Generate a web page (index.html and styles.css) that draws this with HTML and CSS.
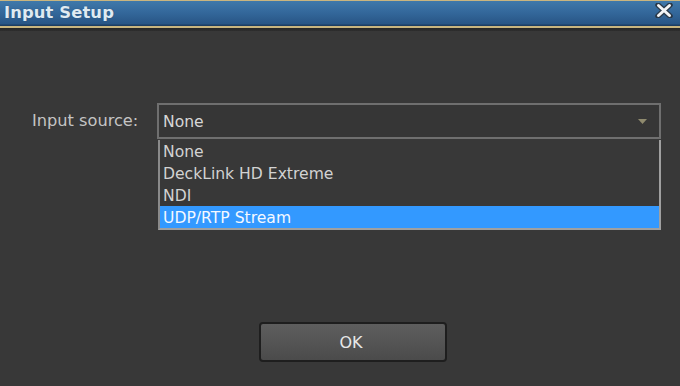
FILE: index.html
```html
<!DOCTYPE html>
<html>
<head>
<meta charset="utf-8">
<link rel="stylesheet" href="styles.css">
</head>
<body>
<div class="window">
  <div class="titlebar">
    <span class="title">Input Setup</span>
    <svg class="close" width="18" height="15" viewBox="0 0 18 15">
      <path d="M3 2 L15 13 M15 2 L3 13" stroke="#2a3a4a" stroke-width="5.5" stroke-linecap="round"/>
      <path d="M3.5 2.5 L14.5 12.5 M14.5 2.5 L3.5 12.5" stroke="#f2f4f6" stroke-width="3" stroke-linecap="round"/>
    </svg>
  </div>
  <div class="content">
    <div class="field">
      <label class="label">Input source:</label>
      <div class="combo">
        <div class="combo-box">
          <span class="combo-value">None</span>
          <svg class="arrow" width="9" height="6" viewBox="0 0 9 6"><path d="M0 0 L9 0 L4.5 5 Z" fill="#8f8a6e"/></svg>
        </div>
        <ul class="list">
          <li class="item">None</li>
          <li class="item">DeckLink HD Extreme</li>
          <li class="item">NDI</li>
          <li class="item selected">UDP/RTP Stream</li>
        </ul>
      </div>
    </div>
    <div class="actions">
      <button class="ok">OK</button>
    </div>
  </div>
</div>
</body>
</html>
```

FILE: styles.css
```css
* { box-sizing: border-box; }
html, body {
  margin: 0;
  padding: 0;
  width: 680px;
  height: 386px;
  background: #383838;
  overflow: hidden;
}
.window {
  width: 680px;
  height: 386px;
  display: flex;
  flex-direction: column;
  background: #383838;
  font-family: "DejaVu Sans", Verdana, sans-serif;
}
.titlebar {
  height: 31px;
  display: flex;
  align-items: flex-start;
  justify-content: space-between;
  padding: 0 7px 0 4px;
  border-top: 1px solid #c9b57f;
  background:
    linear-gradient(to bottom, #3f79aa 0px, #33679a 12px, #285585 23px, #1c3d62 24px, #1c3d62 25px, #c9b57f 25px, #c9b57f 27px, #262626 27px, #2e2e2e 30px);
}
.title {
  color: #dfeaf2;
  font-weight: bold;
  font-size: 16.4px;
  line-height: 24px;
  letter-spacing: 0.1px;
  text-shadow: 0 0 1px #24496f;
}
.close {
  margin-top: 2px;
}
.content {
  flex: 1;
  display: flex;
  flex-direction: column;
  padding: 72px 19px 24px 32px;
}
.field {
  display: flex;
  align-items: flex-start;
}
.label {
  width: 125px;
  color: #c4c4c4;
  font-size: 16.2px;
  line-height: 36px;
}
.combo {
  position: relative;
  width: 504px;
}
.combo-box {
  height: 36px;
  border: 2px solid #6f6f6f;
  background: #363636;
  display: flex;
  align-items: center;
  justify-content: space-between;
  padding: 1px 12px 0 4px;
}
.combo-value {
  color: #d6d6d6;
  font-size: 15.6px;
}
.arrow {
  margin-top: 0;
}
.list {
  position: absolute;
  left: 1px;
  top: 37px;
  width: 503px;
  margin: 0;
  padding: 0;
  list-style: none;
  background: #383838;
  border-left: 2px solid #8a8a8a;
  border-right: 2px solid #a0a0a0;
  border-bottom: 2px solid #a0a0a0;
}
.item {
  height: 22px;
  line-height: 20px;
  padding: 2px 0 0 3px;
  color: #d2d2d2;
  font-size: 15.6px;
}
.item.selected {
  background: #3399ff;
  color: #f4f8ff;
}
.actions {
  margin-top: auto;
  display: flex;
  padding-left: 227px;
}
.ok {
  width: 188px;
  height: 40px;
  border: 2px solid #1e1e1e;
  border-radius: 4px;
  background: linear-gradient(to bottom, #5e5e5e, #4b4b4b);
  color: #e8e8e8;
  font-family: "DejaVu Sans", Verdana, sans-serif;
  font-size: 16px;
  padding: 0 4px 0 0;
}
```
